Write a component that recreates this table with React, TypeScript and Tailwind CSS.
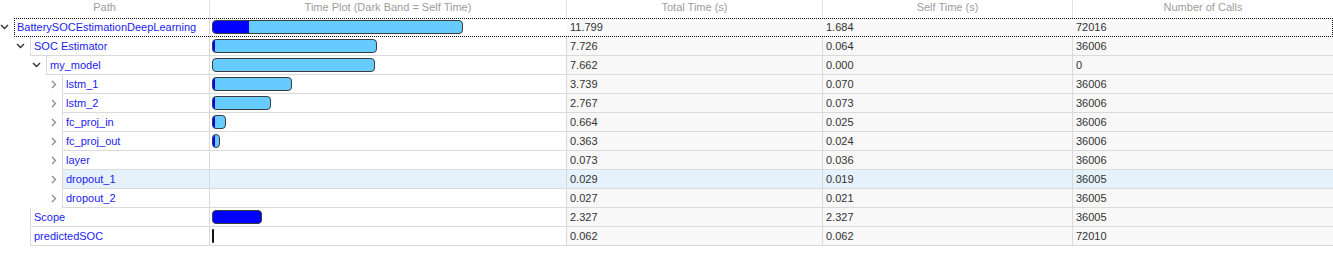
import React from "react"

type Row = {
  name: string
  level: number
  toggle: "open" | "closed" | "none"
  total: number
  self: number
  calls: string
  bar: boolean
  selected?: boolean
}

const rows: Row[] = [
  { name: "BatterySOCEstimationDeepLearning", level: 0, toggle: "open", total: 11.799, self: 1.684, calls: "72016", bar: true },
  { name: "SOC Estimator", level: 1, toggle: "open", total: 7.726, self: 0.064, calls: "36006", bar: true },
  { name: "my_model", level: 2, toggle: "open", total: 7.662, self: 0.0, calls: "0", bar: true },
  { name: "lstm_1", level: 3, toggle: "closed", total: 3.739, self: 0.07, calls: "36006", bar: true },
  { name: "lstm_2", level: 3, toggle: "closed", total: 2.767, self: 0.073, calls: "36006", bar: true },
  { name: "fc_proj_in", level: 3, toggle: "closed", total: 0.664, self: 0.025, calls: "36006", bar: true },
  { name: "fc_proj_out", level: 3, toggle: "closed", total: 0.363, self: 0.024, calls: "36006", bar: true },
  { name: "layer", level: 3, toggle: "closed", total: 0.073, self: 0.036, calls: "36006", bar: false },
  { name: "dropout_1", level: 3, toggle: "closed", total: 0.029, self: 0.019, calls: "36005", bar: false, selected: true },
  { name: "dropout_2", level: 3, toggle: "closed", total: 0.027, self: 0.021, calls: "36005", bar: false },
  { name: "Scope", level: 1, toggle: "none", total: 2.327, self: 2.327, calls: "36005", bar: true },
  { name: "predictedSOC", level: 1, toggle: "none", total: 0.062, self: 0.062, calls: "72010", bar: true },
]

const PX_PER_SEC = 21.3
const indent = [0, 16, 32, 48]

function Chevron({ kind }: { kind: "open" | "closed" }) {
  if (kind === "open") {
    return (
      <svg width="9" height="6" viewBox="0 0 9 6" className="shrink-0">
        <polyline points="1,1 4.5,4.5 8,1" fill="none" stroke="#333" strokeWidth="1.4" />
      </svg>
    )
  }
  return (
    <svg width="6" height="9" viewBox="0 0 6 9" className="shrink-0">
      <polyline points="1,1 4.5,4.5 1,8" fill="none" stroke="#8a8a8a" strokeWidth="1.3" />
    </svg>
  )
}

function Bar({ total, self }: { total: number; self: number }) {
  const w = Math.max(Math.round(total * PX_PER_SEC), 3)
  const band = Math.max(self * PX_PER_SEC, self > 0 ? 1.5 : 0)
  const allSelf = self >= total
  if (w <= 3) {
    return <div className="h-[14px] w-[2px] rounded-full bg-[#111]" />
  }
  return (
    <div
      className={`h-[14px] rounded-[4px] border border-[#3c3c3c] overflow-hidden flex ${allSelf ? "bg-[#0000ff]" : "bg-[#66ccff]"}`}
      style={{ width: w }}
    >
      {!allSelf && <div className="h-full bg-[#0000ff]" style={{ width: band }} />}
    </div>
  )
}

export default function App() {
  return (
    <div className="w-[1333px] h-[256px] bg-white text-[11px] font-['Liberation_Sans',sans-serif] select-none">
      {/* header */}
      <div className="flex h-[18px] text-[#9d9d9d] leading-[15px]">
        <div className="w-[210px] shrink-0 text-center border-r border-[#e3e3e3]">Path</div>
        <div className="w-[357px] shrink-0 text-center border-r border-[#e3e3e3]">Time Plot (Dark Band = Self Time)</div>
        <div className="w-[256px] shrink-0 text-center border-r border-[#e3e3e3]">Total Time (s)</div>
        <div className="w-[250px] shrink-0 text-center border-r border-[#e3e3e3]">Self Time (s)</div>
        <div className="flex-1 text-center">Number of Calls</div>
      </div>

      {rows.map((r, i) => {
        const first = i === 0
        const rowBg = r.selected ? "bg-[#e5f1fb]" : ""
        const numBg = r.selected ? "bg-[#e5f1fb]" : "bg-[#f8f8f8]"
        const lineB = first ? "border-b border-transparent" : "border-b border-[#dadada]"
        return (
          <div key={r.name} className="relative flex h-[19px] leading-[18px]">
            {/* path */}
            <div className="w-[210px] shrink-0 flex border-r border-[#dadada]">
              <div
                className="shrink-0 flex items-center justify-end pr-[5px] h-[18px]"
                style={{ width: indent[r.level] + 14 }}
              >
                {r.toggle !== "none" && <Chevron kind={r.toggle} />}
              </div>
              <div
                className={`flex-1 pl-[3px] text-[#1c1cf0] whitespace-nowrap ${first ? "" : "border-l border-[#dadada]"} ${lineB} ${rowBg}`}
              >
                {r.name}
              </div>
            </div>
            {/* time plot */}
            <div className={`w-[357px] shrink-0 flex items-center pl-[2px] border-r border-[#dadada] ${lineB} ${rowBg}`}>
              {r.bar && <Bar total={r.total} self={r.self} />}
            </div>
            <div className={`w-[256px] shrink-0 pl-[3px] text-[#333] border-r border-[#dadada] ${lineB} ${numBg}`}>
              {r.total.toFixed(3)}
            </div>
            <div className={`w-[250px] shrink-0 pl-[3px] text-[#333] border-r border-[#dadada] ${lineB} ${numBg}`}>
              {r.self.toFixed(3)}
            </div>
            <div className={`flex-1 pl-[3px] text-[#333] ${lineB} ${numBg}`}>{r.calls}</div>
            {first && (
              <div className="absolute left-[14px] right-0 top-0 h-[19px] border border-dotted border-[#111] pointer-events-none" />
            )}
          </div>
        )
      })}
    </div>
  )
}
